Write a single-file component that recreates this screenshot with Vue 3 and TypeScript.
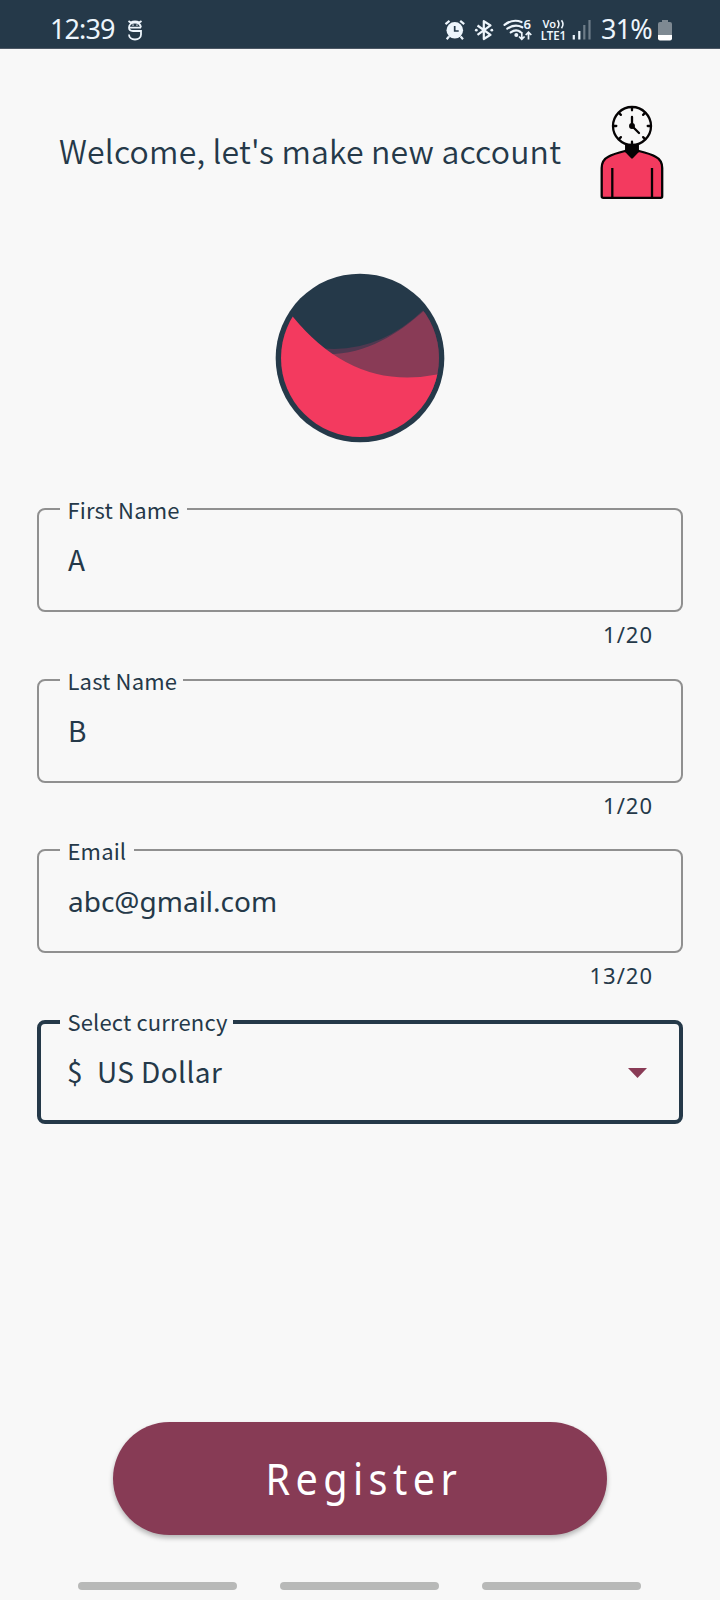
<script setup lang="ts">
interface Field {
  id: string
  label: string
  value: string
  counter?: string
}

const fields: Field[] = [
  { id: 'first', label: 'First Name', value: 'A', counter: '1/20' },
  { id: 'last', label: 'Last Name', value: 'B', counter: '1/20' },
  { id: 'email', label: 'Email', value: 'abc@gmail.com', counter: '13/20' },
  { id: 'currency', label: 'Select currency', value: 'US Dollar' },
]
const ticks = [0, 45, 90, 135, 180, 225, 270, 315]
</script>

<template>
  <div class="screen">
    <header class="status">
      <span class="time">12:39</span>
      <svg class="app-icon" width="16" height="21" viewBox="0 0 16 21" fill="none" stroke="#edf5fc" stroke-width="1.8">
        <path d="M1.500 1l2 1.500Q8 .4 12.500 2.500l2-1.500M14 7.500C13.500 4 11.500 2.500 8 2.500S2 4.500 2 7.500 3.500 11 6 11h8v3.500c0 3-2.500 5-6 5s-6-2-6-5M2 7.700h12" />
        <path d="M5.500 5.200h1M9.500 5.200h1" />
      </svg>
      <div class="tray">
        <svg class="indicators" width="162" height="30" viewBox="430 14 162 30" fill="none" stroke="#edf5fc">
          <!-- alarm -->
          <circle cx="454.800" cy="30.300" r="8.300" fill="#edf5fc" stroke="none" />
          <path d="M445.500 24.200l4-3.400M464.200 24.200l-4-3.400M449 36.500l-2.300 2.700M460.700 36.500l2.300 2.700" stroke-width="2.200" />
          <path d="M454.700 26v5h4" stroke="#253949" stroke-width="1.700" />
          <!-- bluetooth -->
          <path d="M477.500 25.500l13 9.300-6.700 4.200V21.200l6.700 4.200-13 9.500" stroke-width="2.200" stroke-linejoin="round" />
          <circle cx="476.300" cy="30.200" r="1.400" fill="#edf5fc" stroke="none" />
          <circle cx="491.800" cy="30.200" r="1.400" fill="#edf5fc" stroke="none" />
          <!-- wifi -->
          <path d="M504.500 24.800Q513 18.500 521.500 22M507.300 28.700Q514.800 23.500 522.300 27.300M510.700 32.400Q516 28.800 520.500 32" stroke-width="2.200" stroke-linecap="round" />
          <circle cx="516.300" cy="35" r="2" fill="#edf5fc" stroke="none" />
          <path d="M521.800 32v7M519 36.500l2.800 2.900 2.800-2.900M528.500 39.500v-7M525.700 35l2.800-2.900 2.800 2.900" stroke-width="1.700" />
          <text class="tiny" x="523.500" y="29" textLength="7.500" lengthAdjust="spacingAndGlyphs" font-size="13">6</text>
          <!-- network -->
          <text class="tiny" x="542.500" y="28" textLength="13.500" lengthAdjust="spacingAndGlyphs" font-size="10.500">Vo</text>
          <path d="M557.500 20.300q3 4 0 8M561.500 20.300q3 4 0 8" stroke-width="1.600" />
          <text class="tiny" x="540.700" y="40.300" textLength="25.500" lengthAdjust="spacingAndGlyphs" font-size="12.500">LTE1</text>
          <!-- signal -->
          <path d="M573.800 35v4.500M579.300 31v8.500" stroke-width="2.200" />
          <path d="M584.300 25v14.500M589.500 20v19.500" stroke="#6e7d89" stroke-width="2.200" />
        </svg>
        <span class="percent">31%</span>
        <svg class="battery" width="14" height="21" viewBox="0 0 14 21">
          <path d="M4 0h6v2h2q2 0 2 2v11H0V4q0-2 2-2h2z" fill="#7e8992" />
          <path d="M0 15h14v3.500q0 2-2 2H2q-2 0-2-2z" fill="#fff" />
        </svg>
      </div>
    </header>

    <section class="welcome">
      <h1>Welcome, let's make new account</h1>
      <svg class="logo" width="66" height="96" viewBox="0 0 66 96" fill="none" stroke="#050304" stroke-width="2.300" stroke-linecap="round" stroke-linejoin="round">
        <path d="M2.700 91.200V63q0-8 7-11.500Q14 49 26 46h14q12 3 16.200 5.500 7 3.500 7 11.500v28.200q0 1.600-1.600 1.600H4.300q-1.600 0-1.600-1.600z" fill="#f33a5f" />
        <path d="M13.300 63v29.500M53 63v29.500" stroke-linecap="butt" />
        <path d="M27.200 39H38.800V46.500L33 52.500 27.200 46.500z" fill="#050304" />
        <circle cx="33" cy="21" r="19" fill="#f8f8f8" />
        <path v-for="t in ticks" :key="t" d="M33 2.500v2.800" :transform="`rotate(${t} 33 21)`" />
        <path d="M33 12v9l7 7" />
        <circle cx="33" cy="21" r="1.800" fill="#050304" />
      </svg>
    </section>

    <svg class="avatar" width="170" height="170" viewBox="44 37.500 510 510">
      <defs>
        <clipPath id="disc"><circle cx="299" cy="292.500" r="237" /></clipPath>
      </defs>
      <circle cx="299" cy="292.500" r="253" fill="#253949" />
      <g clip-path="url(#disc)">
        <path d="M190 264Q355 278 490 148L570 90V400H190z" fill="#4f3850" />
        <path d="M190 281C315 285 410 222 492 150L570 90V400H190z" fill="#893b56" />
        <path d="M40 100L97 168Q280 392 530 342L580 330V570H40z" fill="#f33a5f" />
      </g>
    </svg>

    <main class="form">
      <div v-for="f in fields" :key="f.id" class="group">
        <div class="field" :class="{ active: f.id === 'currency' }">
          <label :class="f.id">{{ f.label }}</label>
          <span v-if="f.id === 'currency'" class="symbol">$</span>
          <span class="value" :class="'v-' + f.id">{{ f.value }}</span>
          <svg v-if="f.id === 'currency'" class="arrow" width="19" height="10" viewBox="0 0 19 10"><path d="M0 0h19L9.500 10z" fill="#893b56" /></svg>
        </div>
        <div v-if="f.counter" class="counter">{{ f.counter }}</div>
      </div>
    </main>

    <button class="register" type="button"><span>Register</span></button>
    <nav class="nav"><i></i><i></i><i></i></nav>
  </div>
</template>

<style>
body { margin: 0; background: #f8f8f8; }
</style>

<style scoped>
.screen {
  width: 720px; height: 1600px; box-sizing: border-box; overflow: hidden;
  display: flex; flex-direction: column; align-items: center;
  background: #f8f8f8; color: #253949;
  font-family: "Noto Sans CJK SC", "Noto Sans", sans-serif;
}
.status {
  width: 720px; height: 49px; box-sizing: border-box; flex: none;
  display: flex; align-items: flex-start; padding: 0 48px 0 50px;
  background: #253949; color: #edf5fc; border-bottom: 1px solid #4c5764;
}
.time, .percent { font: 27px/36px "Noto Sans", sans-serif; padding-top: 11px; }
.time { width: 64px; letter-spacing: -0.9px; }
.app-icon { margin: 20px 0 0 13px; }
.tray { margin-left: auto; display: flex; }
.indicators { margin: 14px 9px 0 0; flex: none; }
.tiny { fill: #edf5fc; stroke: none; font-family: "Noto Sans", sans-serif; font-weight: 600; }
.percent { width: 53px; letter-spacing: -0.8px; margin-right: 4px; }
.battery { margin-top: 20px; }
.welcome {
  width: 720px; height: 112px; box-sizing: border-box; padding: 0 55px 0 59px; margin-top: 55px; flex: none;
  display: flex; align-items: flex-start; justify-content: space-between;
}
h1 { margin: 22px 0 0; font-size: 32px; line-height: 48px; font-weight: 350; letter-spacing: 0.18px; white-space: nowrap; }
.logo { flex: none; margin-top: 1px; }
.avatar { margin-top: 57px; flex: none; }
.form { width: 646px; margin-top: 65px; }
.group { height: 170.670px; }
.field {
  position: relative; height: 104px; box-sizing: border-box; padding: 0 35px 2px 29px;
  border: 2px solid #909090; border-radius: 8px; display: flex; align-items: center;
}
.field.active { border: 4px solid #253949; padding: 0 32px 2px 26px; }
.field label {
  position: absolute; left: 21px; top: -17px; height: 32px; padding-left: 7.5px; box-sizing: border-box;
  background: #f8f8f8; font-size: 22px; line-height: 32px; letter-spacing: 0.15px; white-space: nowrap;
}
.field.active label { left: 19px; top: -19px; }
.first { width: 127px; }
.last { width: 123px; }
.email { width: 74px; }
.currency { width: 173px; }
.value, .symbol { font-size: 28px; line-height: 40px; white-space: pre; }
.v-email { font-family: "Noto Sans", sans-serif; padding-top: 2px; }
.v-currency { letter-spacing: 0.4px; }
.symbol { width: 30px; }
.arrow { margin: 4px 0 0 auto; }
.counter { text-align: right; padding-right: 30px; font: 22px/32px "Noto Sans", sans-serif; letter-spacing: 1px; margin-top: 6px; }
.register {
  width: 494px; height: 113px; flex: none; border: 0; border-radius: 57px; padding: 0; margin-top: 231px;
  background: #873b55; color: #fff; box-shadow: 0 3px 5px rgba(0, 0, 0, .28);
  font: 44px/60px "Noto Sans", sans-serif; letter-spacing: 6px;
}
.register span { display: inline-block; transform: scaleX(.9); padding-left: 9px; }
.nav { width: 563px; display: flex; justify-content: space-between; margin: 47px 1px 0 0; }
.nav i { width: 159px; height: 8px; border-radius: 4px; background: #b8b9b8; }
</style>
